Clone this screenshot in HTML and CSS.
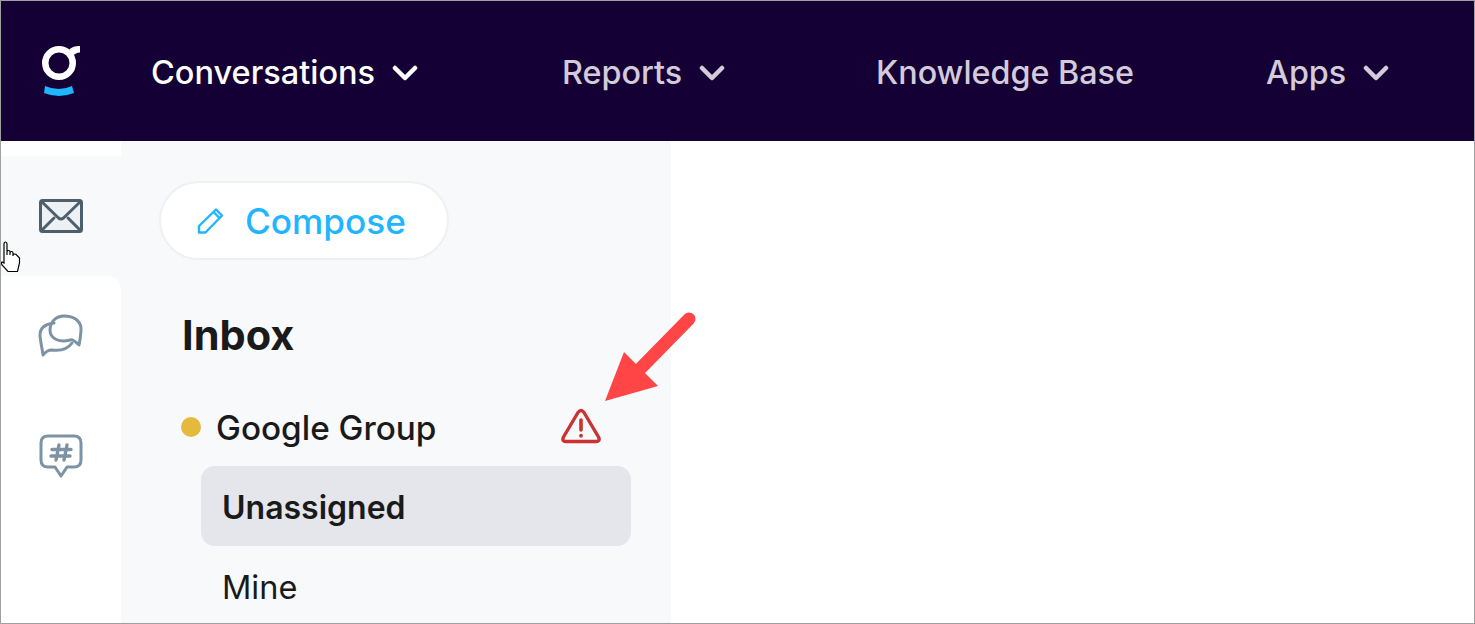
FILE: index.html
```html
<!DOCTYPE html>
<html lang="en">
<head>
<meta charset="utf-8">
<title>Inbox</title>
<link rel="stylesheet" href="styles.css">
</head>
<body>
<div class="frame">
  <header class="topbar">
    <svg class="logo" width="40" height="50" viewBox="0 0 40 50">
      <circle cx="18" cy="17" r="13.750" fill="none" stroke="#fff" stroke-width="6.500"/>
      <path d="M27 5C30 1 34 0 39 0V6.500C36 6.500 33 8 31 11Z" fill="#fff"/>
      <path d="M4 40Q18 46 31 40L33 47Q18 53 3 47Z" fill="#1fb6ff"/>
    </svg>
    <nav class="nav">
      <a class="nav-item nav-active">Conversations<svg class="chev" width="26" height="16" viewBox="0 0 26 16"><path d="M3 3l10 10L23 3" fill="none" stroke="currentColor" stroke-width="4.500" stroke-linecap="round" stroke-linejoin="round"/></svg></a>
      <a class="nav-item">Reports<svg class="chev" width="26" height="16" viewBox="0 0 26 16"><path d="M3 3l10 10L23 3" fill="none" stroke="currentColor" stroke-width="4.500" stroke-linecap="round" stroke-linejoin="round"/></svg></a>
      <a class="nav-item">Knowledge Base</a>
      <a class="nav-item">Apps<svg class="chev" width="26" height="16" viewBox="0 0 26 16"><path d="M3 3l10 10L23 3" fill="none" stroke="currentColor" stroke-width="4.500" stroke-linecap="round" stroke-linejoin="round"/></svg></a>
    </nav>
  </header>
  <div class="body">
    <aside class="rail">
      <div class="rail-top"></div>
      <div class="rail-item rail-active">
        <svg width="44" height="34" viewBox="0 0 44 34" fill="none" stroke="#4d5f6d" stroke-width="3" stroke-linejoin="round" stroke-linecap="round">
          <rect x="1.500" y="1.500" width="41" height="31" rx="2" fill="#eef1f3"/>
          <path d="M3 3l16.500 16q2.500 2 5 0L41 3M3 31l12-12M41 31L29 19"/>
        </svg>
      </div>
      <div class="rail-rest">
        <div class="rail-item">
          <svg width="46" height="44" viewBox="0 0 46 44" fill="none" stroke="#7d92a3" stroke-width="3" stroke-linejoin="round" stroke-linecap="round">
            <path d="M16 9C8 10 2 13 2 21c0 4 2 13 3 20 3-4 6-5 9-5 9 1 16-1 20-7"/>
            <path d="M26 2c10 0 17 5 17 13 0 6-1 11-2 16-3-3-6-6-9-5-10 3-20-1-20-10C12 8 18 2 26 2Z"/>
          </svg>
        </div>
        <div class="rail-item">
          <svg width="44" height="44" viewBox="0 0 44 44" fill="none" stroke="#7d92a3" stroke-width="3" stroke-linejoin="round" stroke-linecap="round">
            <path d="M9 2h26q7 0 7 7v17q0 7-7 7h-7l-6 9-6-9H9q-7 0-7-7V9q0-7 7-7Z"/>
            <path d="M20 11l-3 15M28 11l-3 15M13 15.500h19M12 22h19" stroke-width="3.400"/>
          </svg>
        </div>
      </div>
    </aside>
    <section class="sidebar">
      <button class="compose">
        <svg width="28" height="28" viewBox="0 0 28 28" fill="none" stroke="#1fb6ff" stroke-width="2.400" stroke-linejoin="round">
          <path d="M2 25.500v-6.500L19 2.500l6 6L8.500 25.500ZM16.500 5l6 6"/>
        </svg>
        <span>Compose</span>
      </button>
      <h1 class="title">Inbox</h1>
      <div class="group">
        <span class="dot"></span>
        <span class="group-name">Google Group</span>
        <svg class="warn" width="40" height="36" viewBox="0 0 40 36" fill="none" stroke="#cb3232" stroke-width="3.400" stroke-linejoin="round" stroke-linecap="round">
          <path d="M17 4.500Q20 .5 23 4.500L37.500 29q2 4.500-2.500 4.500H5Q.5 33.500 2.500 29Z"/>
          <path d="M20 12v10" stroke-width="3.600"/>
          <path d="M20 27.500v.5" stroke-width="3.600"/>
        </svg>
      </div>
      <a class="folder folder-active">Unassigned</a>
      <a class="folder">Mine</a>
    </section>
    <main class="content"></main>
  </div>
  <svg class="arrow" width="92" height="96" viewBox="0 0 92 96">
    <path d="M84 9L34 60" stroke="#ff4545" stroke-width="13" stroke-linecap="round"/>
    <path d="M0 91L19 42 53 76Z" fill="#ff4545"/>
  </svg>
  <svg class="cursor" width="20" height="32" viewBox="0 0 20 32">
    <path d="M3 22V3q0-2 1.500-2T6 3v11V11q0-1.500 1.500-1.500T9 11v3-2q0-1.500 1.500-1.500T12 12v3-1q0-1 1.500-1t2 1l3 3v5l-2 8.500H7L1 24q-1-2 0-3l2 1Z" fill="#fff" stroke="#000" stroke-width="1.200"/>
  </svg>
</div>
</body>
</html>
```

FILE: styles.css
```css
* { box-sizing: border-box; }
html, body { margin: 0; padding: 0; }
body { width: 1475px; height: 624px; overflow: hidden; font-family: Inter, "Liberation Sans", sans-serif; color: #1a1a1a; }
.frame { position: relative; width: 1475px; height: 624px; border: 1px solid #a0a0a0; display: flex; flex-direction: column; overflow: hidden; background: #fff; }
.topbar { height: 140px; background: #150036; display: flex; align-items: flex-start; padding-left: 40px; flex: none; }
.logo { flex: none; margin-top: 45px; }
.nav { margin-left: 70px; display: grid; grid-template-columns: 411px 314px 390px 1fr; flex: 1; margin-top: 51px; }
.nav-item { display: flex; align-items: center; height: 40px; font-size: 32.300px; font-weight: 500; letter-spacing: 0; color: #d3cbd9; white-space: nowrap; }
.nav-active { color: #fff; font-size: 32.500px; }
.chev { margin-left: 17px; margin-top: 2px; flex: none; }
.body { flex: 1; display: flex; min-height: 0; }
.rail { width: 120px; flex: none; display: flex; flex-direction: column; background: #f8f9fb; }
.rail-top { height: 15px; background: #fff; flex: none; }
.rail-item { height: 120px; display: flex; justify-content: center; flex: none; padding-top: 38px; }
.rail-active { padding-top: 43px; }
.rail-rest { flex: 1; background: #fff; border-top-right-radius: 14px; }
.sidebar { width: 550px; flex: none; background: #f8f9fb; padding: 40px 40px 0 38px; display: flex; flex-direction: column; align-items: flex-start; overflow: hidden; }
.sidebar > * { flex: none; }
.compose { width: 290px; height: 79px; border: 2px solid #eef0f4; border-radius: 40px; background: #fff; display: flex; align-items: center; padding: 0 0 0 36px; gap: 20px; font-family: inherit; font-size: 35.200px; font-weight: 500; color: #1fb6ff; letter-spacing: 0; }
.title { margin: 52px 0 0 23px; font-size: 41.500px; line-height: 46px; font-weight: 700; letter-spacing: 0; color: #1a1a1a; }
.group { margin-top: 48px; margin-left: 22px; height: 44px; width: 420px; display: flex; align-items: center; font-size: 33.300px; font-weight: 500; letter-spacing: 0; }
.dot { width: 20px; height: 20px; border-radius: 50%; background: #e5b93c; flex: none; margin-top: -3px; }
.group-name { margin-top: -1px; margin-left: 15px; }
.warn { margin-left: auto; margin-top: -4px; flex: none; }
.folder { display: flex; align-items: center; margin: 0 0 0 42px; width: 430px; height: 80px; padding: 2px 0 0 21px; font-size: 32.500px; letter-spacing: 0; border-radius: 14px; }
.folder-active { margin-top: 16px; background: #e4e6eb; font-weight: 600; font-size: 32px; }
.content { flex: 1; background: #fff; }
.arrow { position: absolute; left: 604px; top: 309px; }
.cursor { position: absolute; left: 0; top: 240px; }
```
